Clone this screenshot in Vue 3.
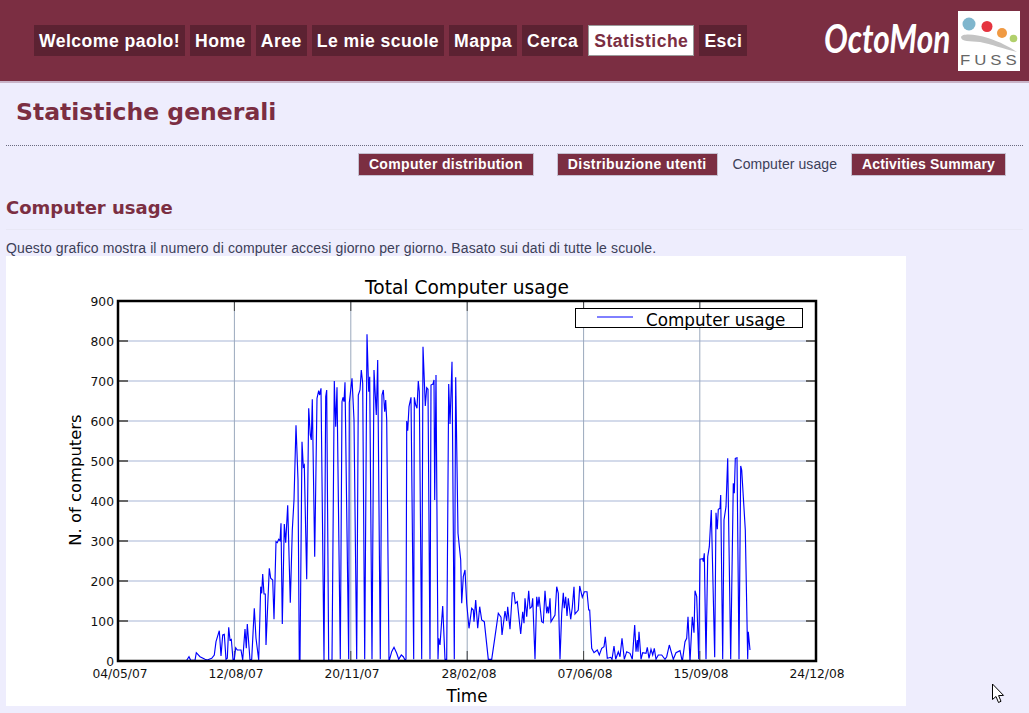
<template>
  <div class="page">
    <header class="top">
      <nav class="top__nav">
        <a
          v-for="item in navItems"
          :key="item"
          class="top__link"
          :class="{ 'top__link--active': item === 'Statistiche' }"
        >{{ item }}</a>
      </nav>
      <div class="top__logos">
        <svg class="logo-octomon" width="130" height="50" viewBox="0 0 130 50">
          <text transform="translate(1 37) scale(0.79 1)" class="logo-octomon__text">OctoMon</text>
        </svg>
        <svg class="logo-fuss" width="62" height="60" viewBox="0 0 62 60">
          <rect width="62" height="60" fill="#fff" />
          <circle cx="11" cy="13" r="6.5" fill="#7fb6cd" />
          <circle cx="29" cy="15.5" r="5.5" fill="#e5343f" />
          <circle cx="44" cy="22" r="5" fill="#f09a43" />
          <circle cx="55.5" cy="27.5" r="3.8" fill="#b1d06c" />
          <path d="M3 26 C4 22 18 23 30 27 C42 31 52 36 59 41 C46 38 33 33 22 31 C12 30 3 31 3 26 Z" fill="#c4c4c4" />
          <text transform="translate(2 53.5) scale(1.2 1)" class="logo-fuss__text">FUSS</text>
        </svg>
      </div>
    </header>

    <main class="content">
      <h1 class="content__title">Statistiche generali</h1>

      <div class="tabs">
        <a class="tabs__btn tabs__btn--first">Computer distribution</a>
        <a class="tabs__btn tabs__btn--second">Distribuzione utenti</a>
        <span class="tabs__current">Computer usage</span>
        <a class="tabs__btn tabs__btn--last">Activities Summary</a>
      </div>

      <h2 class="content__subtitle">Computer usage</h2>
      <p class="content__text">Questo grafico mostra il numero di computer accesi giorno per giorno. Basato sui dati di tutte le scuole.</p>

      <svg class="chart" width="900" height="450" viewBox="0 0 900 450">
        <text x="461" y="38" text-anchor="middle" class="chart__title">Total Computer usage</text>

        <line
          v-for="y in yTicks"
          :key="'h' + y.label"
          x1="112" x2="810"
          :y1="y.pos" :y2="y.pos"
          class="chart__grid-h"
        />
        <line
          v-for="x in xLines"
          :key="'v' + x"
          :x1="x" :x2="x"
          y1="45" y2="405"
          class="chart__grid-v"
        />

        <g v-for="y in yTicks.slice(1, -1)" :key="'t' + y.label">
          <line x1="112" x2="122" :y1="y.pos" :y2="y.pos" class="chart__tick" />
          <line x1="800" x2="810" :y1="y.pos" :y2="y.pos" class="chart__tick" />
        </g>
        <g v-for="x in xLines" :key="'vt' + x">
          <line :x1="x" :x2="x" y1="45" y2="55" class="chart__tick chart__tick--thin" />
          <line :x1="x" :x2="x" y1="395" y2="405" class="chart__tick chart__tick--thin" />
        </g>

        <polyline :points="linePoints" class="chart__line" />

        <rect x="112" y="45" width="698" height="360" class="chart__frame" />

        <text
          v-for="y in yTicks"
          :key="'l' + y.label"
          x="108"
          :y="y.pos + 4.5"
          text-anchor="end"
          class="chart__label"
        >{{ y.label }}</text>
        <text
          v-for="x in xLabels"
          :key="x.label"
          :x="x.pos"
          y="422"
          text-anchor="middle"
          class="chart__label"
        >{{ x.label }}</text>

        <text x="461" y="446" text-anchor="middle" class="chart__axis">Time</text>
        <text transform="translate(75 224) rotate(-90)" text-anchor="middle" class="chart__axis chart__axis--y">N. of computers</text>

        <rect x="569.5" y="52.5" width="227" height="19" class="chart__legend" />
        <line x1="591" x2="627" y1="61" y2="61" class="chart__line chart__line--legend" />
        <text x="640" y="70" class="chart__legend-text">Computer usage</text>
      </svg>
    </main>

    <svg class="cursor" width="14" height="22" viewBox="0 0 14 22">
      <path d="M1.5 1 L1.5 16.5 L5 13.5 L7.5 19.5 L10 18.3 L7.6 12.6 L12.5 12.4 Z" fill="#fff" stroke="#000" stroke-width="1" />
    </svg>
  </div>
</template>

<script setup>
import { computed } from 'vue';

const navItems = ['Welcome paolo!', 'Home', 'Aree', 'Le mie scuole', 'Mappa', 'Cerca', 'Statistiche', 'Esci'];

const yTicks = [900, 800, 700, 600, 500, 400, 300, 200, 100, 0].map((v) => ({
  label: String(v),
  pos: 405 - v * 0.4,
}));
const xLines = [228.4, 344.8, 461.2, 577.6, 693.8];
const xLabels = [
  { label: '04/05/07', pos: 114 },
  { label: '12/08/07', pos: 230 },
  { label: '20/11/07', pos: 346 },
  { label: '28/02/08', pos: 463 },
  { label: '07/06/08', pos: 579 },
  { label: '15/09/08', pos: 695 },
  { label: '24/12/08', pos: 811 },
];

// traced off the graph, [x, y] at 3x, first part starts at page x=170, second at x=440 (y from 320)
const firstPart = [
  50,1021, 57,1010, 62,1021, 75,1021, 79,998, 90,1010, 105,1018, 112,1020, 125,1015, 133,1005, 138,965, 148,932, 153,1008,
  158,945, 163,943, 168,1018, 172,1015, 176,922, 180,960, 184,958, 189,1018, 193,1018, 197,983, 202,990, 213,990, 218,1020,
  225,927, 229,985, 232,912, 240,1020, 245,1018, 253,865, 258,955, 266,1020, 272,800, 275,820, 278,762, 282,822, 286,822,
  288,975, 298,745, 302,775, 308,780, 312,898, 318,665, 322,668, 326,658, 330,662, 333,610, 337,912, 343,612, 347,668,
  353,556, 361,848, 367,630, 372,540, 378,316, 384,480, 388,1021, 390,1021, 396,365, 400,440, 403,435, 410,778, 416,265,
  421,345, 424,360, 427,238, 434,710, 441,235, 446,212, 449,225, 453,205, 462,1021, 467,230, 470,210, 476,1021, 486,1021,
  493,183, 497,320, 501,202, 511,1018, 516,245, 519,232, 522,245, 525,187, 536,1018, 538,248, 546,175, 552,300, 560,1018,
  565,225, 570,210, 574,150, 578,190, 584,1018, 591,43, 596,215, 599,170, 606,1018, 612,150, 619,285, 623,120, 631,1018,
  636,225, 640,210, 644,275, 647,240, 650,300, 657,1025, 665,995, 672,982, 680,1000, 686,1018, 694,1005, 700,1010, 705,1020,
  708,1018, 710,303, 713,332, 717,260, 723,232, 731,1018, 733,232, 737,255, 741,265, 745,183, 748,215, 755,1018, 759,80,
  766,258, 770,203, 774,208, 780,1018, 783,195, 789,192, 792,180, 794,540, 798,165, 804,1018, 806,955, 810,975, 818,858,
  825,1018, 830,1018, 836,192, 840,312, 846,125, 853,1018, 857,172, 864,640, 872,720, 875,850, 880,770, 885,750, 890,850,
  897,925, 905,865, 910,870, 912,905, 917,840, 923,925, 929,860, 935,900, 943,905, 955,1018, 965,1018, 975,950, 985,880,
];
const secondPart = [
  183,892, 186,945, 195,873, 200,903, 203,860, 210,928, 217,818, 222,818, 226,850, 232,845, 242,942, 248,875, 252,910,
  255,835, 260,890, 266,812, 270,865, 275,860, 278,835, 285,1018, 290,830, 294,860, 297,830, 305,905, 310,908, 315,812,
  320,880, 323,860, 326,880, 330,835, 333,905, 345,885, 350,800, 355,820, 360,1018, 365,880, 370,818, 373,865, 377,830,
  381,888, 385,835, 392,898, 397,862, 402,800, 405,882, 415,870, 419,798, 427,832, 433,815, 441,815, 446,870, 449,870,
  455,985, 462,998, 472,990, 478,1005, 485,985, 492,980, 496,950, 502,1015, 512,1012, 516,1018, 522,978, 527,1018, 535,995,
  540,1010, 546,955, 553,1018, 560,995, 570,1000, 577,1018, 584,915, 588,995, 592,960, 594,995, 597,935, 603,1018, 608,998,
  618,1000, 622,982, 627,1015, 633,988, 638,1005, 643,985, 648,1018, 655,1005, 665,1005, 675,1018, 680,1010, 688,975,
  700,1018, 708,998, 720,992, 727,1025, 735,965, 740,955, 744,890, 750,1025, 757,890, 762,938, 765,812, 770,830, 776,1018,
  780,718, 788,716, 790,725, 793,700, 798,1018, 803,710, 808,680, 814,570, 824,1012, 828,578, 832,628, 835,568, 840,565,
  842,525, 848,1018, 852,600, 858,560, 863,415, 872,1018, 880,490, 883,520, 886,415, 891,413, 897,1018, 902,438, 905,450,
  910,530, 916,630, 923,1018, 925,935, 930,990,
];

function toChart(list, startX) {
  const out = [];
  for (let i = 0; i < list.length; i += 2) {
    // chart svg sits at page 6,256
    out.push(`${(startX + list[i] / 3 - 6).toFixed(1)},${(320 + list[i + 1] / 3 - 256).toFixed(1)}`);
  }
  return out;
}

const linePoints = computed(() => [...toChart(firstPart, 170), ...toChart(secondPart, 440)].join(' '));
</script>

<style>
html, body {
  margin: 0;
  background: #eeedfd;
}
</style>

<style scoped>
.page {
  position: relative;
  height: 713px;
  overflow: hidden;
  background: #eeedfd;
  font-family: "Liberation Sans", Arial, sans-serif;
}
.top {
  display: flex;
  align-items: center;
  justify-content: space-between;
  box-sizing: border-box;
  height: 83px;
  padding: 0 9px 0 34px;
  background: #7b2e42;
  border-bottom: 2px solid #c9b4c8;
}
.top__nav {
  display: flex;
  gap: 5px;
}
.top__link {
  box-sizing: border-box;
  height: 31px;
  padding: 0 5px;
  line-height: 32px;
  background: #5c2232;
  color: #fff;
  font-size: 17.6px;
  font-weight: bold;
  letter-spacing: 0.46px;
}
.top__link--active {
  background: #fff;
  color: #7b2e42;
  border: 1px solid #9a9a9a;
  line-height: 30px;
  padding: 0 5px;
}
.top__logos {
  display: flex;
  align-items: center;
  gap: 5px;
}
.logo-octomon {
  overflow: visible;
}
.logo-octomon__text {
  font-family: "Lato", sans-serif;
  font-style: italic;
  font-weight: bold;
  font-size: 40px;
  fill: #fff;
}
.logo-fuss__text {
  font-family: "Liberation Sans", sans-serif;
  font-size: 14px;
  letter-spacing: 3.3px;
  fill: #666;
}
.content {
  padding: 0 6px;
}
.content__title {
  margin: 0;
  padding: 13px 10px 16px;
  border-bottom: 1px dotted #6a6a80;
  color: #7b2e42;
  font-family: "DejaVu Sans", sans-serif;
  font-size: 23.5px;
  font-weight: bold;
  line-height: 33px;
}
.tabs {
  display: flex;
  justify-content: flex-end;
  align-items: center;
  gap: 14px;
  height: 22px;
  margin-top: 7px;
  padding-right: 17px;
}
.tabs__btn {
  box-sizing: border-box;
  height: 23px;
  padding: 0 10px;
  line-height: 21px;
  background: #7b2e42;
  border: 1px solid #c5c0d0;
  color: #fff;
  font-size: 14px;
  font-weight: bold;
  letter-spacing: 0.45px;
}
.tabs__btn--first {
  margin-right: 9px;
  letter-spacing: 0.33px;
}
.tabs__btn--second {
  letter-spacing: 0.4px;
}
.tabs__btn--last {
  letter-spacing: 0.17px;
}
.tabs__current {
  margin-left: 1px;
  color: #3c4058;
  font-size: 14px;
  letter-spacing: 0.07px;
}
.content__subtitle {
  margin: 0;
  padding: 20px 0 9px;
  border-bottom: 1px solid #e8e7f5;
  color: #7b2e42;
  font-family: "DejaVu Sans", sans-serif;
  font-size: 18px;
  font-weight: bold;
  line-height: 25px;
}
.content__text {
  margin: 0;
  padding-top: 10px;
  color: #3c4058;
  font-size: 14px;
  line-height: 16px;
  letter-spacing: 0.115px;
}
.chart {
  display: block;
  background: #fff;
}
.chart__title {
  font-family: "DejaVu Sans", sans-serif;
  font-size: 18.6px;
  fill: #000;
}
.chart__grid-h {
  stroke: #d3daea;
  stroke-width: 2;
}
.chart__grid-v {
  stroke: #9aa8bc;
  stroke-width: 1;
}
.chart__tick {
  stroke: #666;
  stroke-width: 2;
}
.chart__tick--thin {
  stroke: #444;
  stroke-width: 1;
}
.chart__line {
  fill: none;
  stroke: #0000ff;
  stroke-width: 1.15;
}
.chart__line--legend {
  stroke-width: 1;
}
.chart__frame {
  fill: none;
  stroke: #000;
  stroke-width: 2.5;
}
.chart__label {
  font-family: "DejaVu Sans", sans-serif;
  font-size: 12.3px;
  fill: #111;
}
.chart__axis {
  font-family: "DejaVu Sans", sans-serif;
  font-size: 16.8px;
  fill: #000;
}
.chart__axis--y {
  font-size: 16.4px;
}
.chart__legend {
  fill: #fff;
  stroke: #000;
  stroke-width: 1;
}
.chart__legend-text {
  font-family: "DejaVu Sans", sans-serif;
  font-size: 16.8px;
  fill: #000;
}
.cursor {
  position: absolute;
  left: 991px;
  top: 683px;
}
</style>
